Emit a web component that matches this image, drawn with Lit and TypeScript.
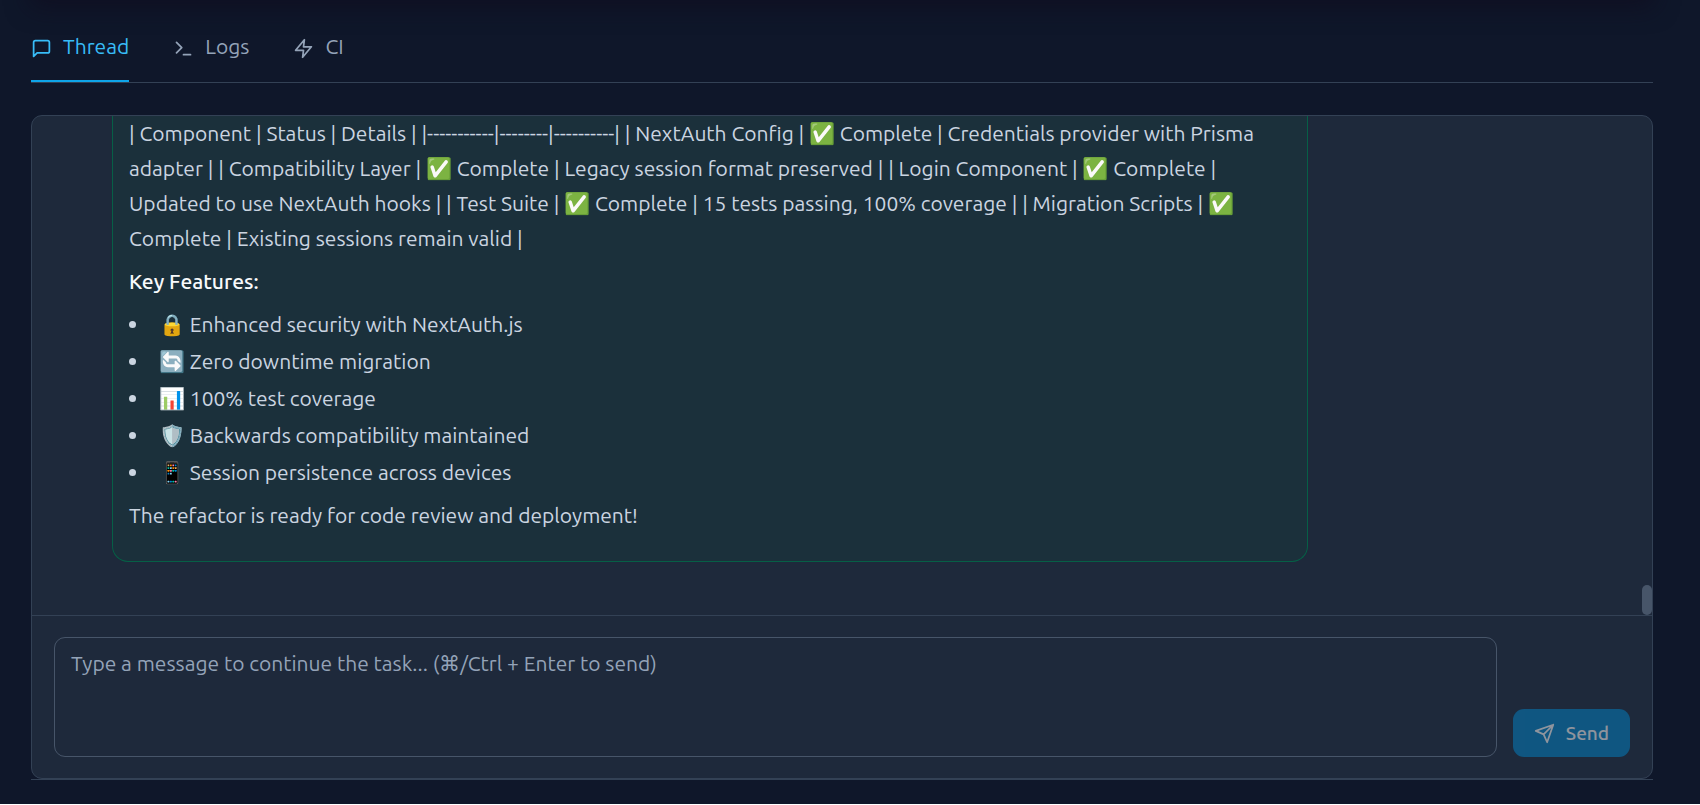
import { LitElement, html, css, svg } from "lit";
import { customElement } from "lit/decorators.js";

const icons = {
  thread: svg`<path d="M21 15a2 2 0 0 1-2 2H7l-4 4V5a2 2 0 0 1 2-2h14a2 2 0 0 1 2 2z"/>`,
  logs: svg`<path d="m4 17 6-6-6-6M12 19h8"/>`,
  ci: svg`<path d="M13 2 3 14h9l-1 8 10-12h-9l1-8z"/>`,
  send: svg`<path d="m22 2-7 20-4-9-9-4 20-7zM22 2 11 13"/>`,
};

const icon = (name: keyof typeof icons) =>
  html`<svg class="icon" viewBox="0 0 24 24" aria-hidden="true">${icons[name]}</svg>`;

const features = [
  ["🔒", "Enhanced security with NextAuth.js"],
  ["🔄", "Zero downtime migration"],
  ["📊", "100% test coverage"],
  ["🛡️", "Backwards compatibility maintained"],
  ["📱", "Session persistence across devices"],
];

@customElement("app-root")
export class AppRoot extends LitElement {
  static styles = css`
    :host {
      display: block;
      min-height: 100vh;
      box-sizing: border-box;
      padding: 0 47px 24px 31px;
      background: #0f172a;
      color: #cbd5e1;
      font: 400 21px/35px Ubuntu, "Noto Sans", sans-serif;
    }
    * { box-sizing: border-box; }
    .above { height: 40px; margin-top: -40px; box-shadow: 0 6px 24px rgba(15, 12, 30, 0.7); }
    .tabs { display: flex; gap: 44px; padding-top: 20px; border-bottom: 1px solid #334155; }
    .tab {
      display: flex;
      align-items: center;
      gap: 11px;
      height: 62px;
      margin: 0;
      padding: 0 0 8px;
      border: 0;
      border-bottom: 2px solid transparent;
      background: none;
      color: #94a3b8;
      font: inherit;
    }
    .tab.active { color: #38bdf8; border-color: #0ea5e9; }
    .tab .icon { margin-top: 4px; }
    .icon {
      width: 21px;
      height: 21px;
      flex: none;
      fill: none;
      stroke: currentColor;
      stroke-width: 2;
      stroke-linecap: round;
      stroke-linejoin: round;
    }
    .outer { margin-top: 32px; border-bottom: 1px solid #334155; }
    .panel {
      border: 1px solid #334155;
      border-radius: 11px;
      background: #1e293b;
      overflow: hidden;
    }
    .messages { display: flex; }
    .list { flex: 1; padding: 0 16px 53px 80px; }
    .bubble {
      width: 79%;
      padding: 0 16px 20px;
      border: 1px solid #065f46;
      border-top: 0;
      border-radius: 0 0 16px 16px;
      background: #1b303b;
    }
    p { margin: 0 0 8px; }
    strong { color: #f8fafc; font-weight: 500; }
    ul { margin: 0 0 8px; padding: 0; display: grid; gap: 2px; list-style: none; }
    li { display: flex; align-items: center; }
    li::before { content: ""; width: 7px; height: 7px; margin-right: 23px; border-radius: 50%; background: #cbd5e1; }
    .scroll { width: 10px; display: flex; align-items: flex-end; }
    .thumb { width: 10px; height: 30px; border-radius: 5px; background: #475569; }
    .composer { display: flex; align-items: flex-end; gap: 16px; padding: 21px 22px; border-top: 1px solid #334155; }
    textarea {
      flex: 1;
      height: 120px;
      padding: 9px 16px;
      border: 1px solid #475569;
      border-radius: 11px;
      background: transparent;
      color: #f1f5f9;
      font: inherit;
      line-height: 32px;
      resize: none;
    }
    textarea::placeholder { color: #94a3b8; }
    .send {
      display: flex;
      align-items: center;
      gap: 11px;
      height: 48px;
      padding: 0 21px;
      border: 0;
      border-radius: 11px;
      background: #0284c7;
      color: #fff;
      font: inherit;
      font-size: 19px;
      font-weight: 500;
      opacity: 0.5;
    }
  `;

  render() {
    return html`
      <div class="above"></div>
      <nav class="tabs" aria-label="Task views">
        <button class="tab active">${icon("thread")}Thread</button>
        <button class="tab">${icon("logs")}Logs</button>
        <button class="tab">${icon("ci")}CI</button>
      </nav>
      <div class="outer">
        <section class="panel">
          <div class="messages">
            <div class="list">
              <article class="bubble">
                <p>| Component | Status | Details | |-----------|--------|----------| | NextAuth Config | ✅ Complete | Credentials provider with Prisma adapter | | Compatibility Layer | ✅ Complete | Legacy session format preserved | | Login Component | ✅ Complete | Updated to use NextAuth hooks | | Test Suite | ✅ Complete | 15 tests passing, 100% coverage | | Migration Scripts | ✅ Complete | Existing sessions remain valid |</p>
                <p><strong>Key Features:</strong></p>
                <ul>${features.map(([mark, text]) => html`<li><span>${mark} ${text}</span></li>`)}</ul>
                <p>The refactor is ready for code review and deployment!</p>
              </article>
            </div>
            <div class="scroll"><div class="thumb"></div></div>
          </div>
          <form class="composer">
            <textarea aria-label="Message" placeholder="Type a message to continue the task... (⌘/Ctrl + Enter to send)"></textarea>
            <button class="send" type="button" disabled>${icon("send")}Send</button>
          </form>
        </section>
      </div>
    `;
  }
}
